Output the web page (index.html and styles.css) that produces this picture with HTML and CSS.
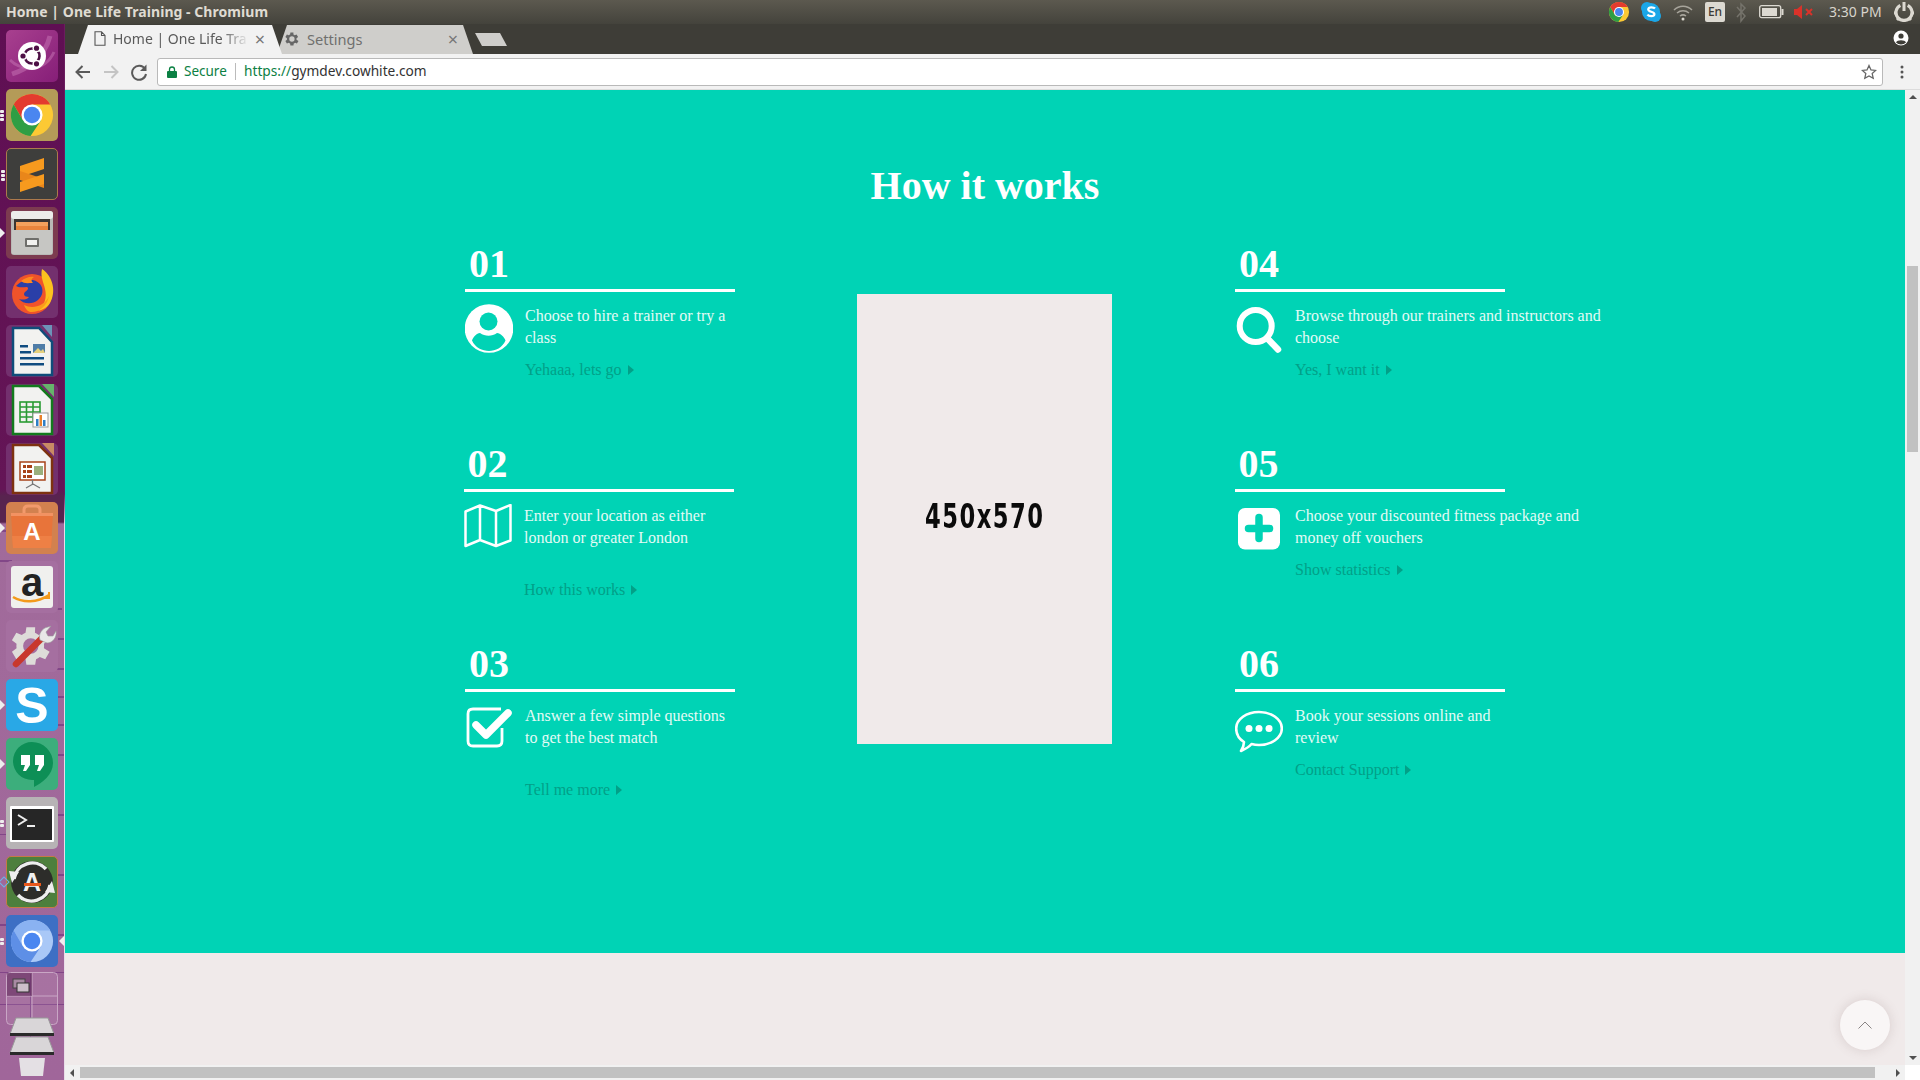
FILE: index.html
```html
<!DOCTYPE html>
<html lang="en">
<head>
<meta charset="utf-8">
<title>Home | One Life Training</title>
<link rel="stylesheet" href="styles.css">
</head>
<body>
<svg class="defs" width="0" height="0" aria-hidden="true">
  <defs>
    <symbol id="chrome" viewBox="0 0 48 48">
      <circle cx="24" cy="24" r="22" fill="#fcc934"/>
      <path d="M4.9 13A22 22 0 0 1 43 13H24L14.5 29.5Z" fill="#e33b2e"/>
      <path d="M4.9 13A22 22 0 0 0 22.5 45.9L33.5 29.5H14.5Z" fill="#2f9e44"/>
      <circle cx="24" cy="24" r="11" fill="#fff"/>
      <circle cx="24" cy="24" r="8.6" fill="#4a86f0"/>
    </symbol>
    <symbol id="chromium" viewBox="0 0 48 48">
      <circle cx="24" cy="24" r="22" fill="#a9c8f7"/>
      <path d="M4.9 13A22 22 0 0 1 43 13H24L14.5 29.5Z" fill="#8ab2f2"/>
      <path d="M4.9 13A22 22 0 0 0 22.5 45.9L33.5 29.5H14.5Z" fill="#5e8fe6"/>
      <circle cx="24" cy="24" r="11" fill="#fff"/>
      <circle cx="24" cy="24" r="8.6" fill="#4a86f0"/>
    </symbol>
    <symbol id="gear" viewBox="3 2 21 20">
      <path d="M19.4 13a7.5 7.5 0 0 0 0-2l2.1-1.6-2-3.4-2.5 1a7.500 7.500 0 0 0-1.700-1L15.400 3.400h-4l-.4 2.600a7.500 7.500 0 0 0-1.700 1l-2.500-1-2 3.400L6.900 11a7.500 7.500 0 0 0 0 2l-2.100 1.600 2 3.400 2.500-1a7.500 7.500 0 0 0 1.700 1l.4 2.600h4l.4-2.600a7.500 7.500 0 0 0 1.700-1l2.500 1 2-3.400ZM13.400 15.500a3.500 3.500 0 1 1 0-7 3.500 3.500 0 0 1 0 7Z"/>
    </symbol>
    <symbol id="caret" viewBox="0 0 6 10"><path d="M0 0l6 5-6 5z"/></symbol>
  </defs>
</svg>

<header class="menubar">
  <span class="window-title">Home | One Life Training - Chromium</span>
  <div class="tray">
    <svg class="tray-icon" width="22" height="22"><use href="#chrome"/></svg>
    <svg class="tray-icon" width="22" height="22" viewBox="0 0 22 22"><circle cx="7" cy="7" r="6" fill="#1ba7e8"/><circle cx="15" cy="15" r="6" fill="#1ba7e8"/><circle cx="11" cy="11" r="9" fill="#1ba7e8"/><path d="M15 7.500c-1-1.300-6.500-2-6.800.8-.2 3 6.500 1.900 6.200 5-.3 2.500-5.500 2.200-7 .3" fill="none" stroke="#fff" stroke-width="2.200"/></svg>
    <svg class="tray-icon" width="22" height="22" viewBox="0 0 22 22"><g fill="none" stroke="#a7a49b" stroke-width="1.500"><path d="M2 9c5-5 13-5 18 0"/><path d="M5 12c3.500-3 8.500-3 12 0"/><path d="M8 15c2-1.500 4-1.500 6 0"/></g><circle cx="11" cy="18" r="1.500" fill="#d8d5cd"/></svg>
    <span class="lang">En</span>
    <svg class="tray-icon" width="14" height="22" viewBox="0 0 14 22"><path d="M3 6l8 9-4 5V3l4 4-8 9" fill="none" stroke="#75736b" stroke-width="1.500"/></svg>
    <svg class="tray-icon" width="25" height="14" viewBox="0 0 25 14"><rect x=".7" y=".7" width="21" height="12" rx="2" fill="none" stroke="#dcd9d1" stroke-width="1.300"/><rect x="3" y="3" width="15" height="8" fill="#dcd9d1"/><rect x="22.500" y="4" width="2" height="6" fill="#dcd9d1"/></svg>
    <svg class="tray-icon" width="20" height="14" viewBox="0 0 20 14"><path d="M0 4h3l5-4v14l-5-4H0z" fill="#d9322a"/><path d="M12 4l6 6M18 4l-6 6" stroke="#d9322a" stroke-width="2"/></svg>
    <span class="clock">3:30 PM</span>
    <svg class="tray-power" width="20" height="20" viewBox="0 0 20 20"><path d="M6.300 3.300a8 8 0 1 0 7.400 0" fill="none" stroke="#dcd9d1" stroke-width="3.200"/><path d="M10 0v9" stroke="#dcd9d1" stroke-width="3"/><g stroke="#dcd9d1" stroke-width="3"><path d="M0 11h3M17 11h3M3 18l2-2M17 18l-2-2M10 20v-2"/></g></svg>
  </div>
</header>

<div class="workspace">
  <nav class="launcher">
    <svg class="behind" width="64" height="530" viewBox="0 0 64 530" aria-hidden="true"><g fill="#6a2a7a" opacity=".55"><rect x="0" y="6" width="16" height="2"/><rect x="0" y="36" width="12" height="2"/><rect x="40" y="84" width="22" height="2"/><rect x="44" y="114" width="20" height="2"/><rect x="52" y="144" width="12" height="2"/><rect x="46" y="172" width="18" height="2"/><rect x="56" y="200" width="8" height="2"/><rect x="56" y="230" width="8" height="2"/><rect x="58" y="290" width="6" height="2"/><rect x="0" y="310" width="22" height="1"/><rect x="58" y="350" width="6" height="2"/><rect x="0" y="400" width="10" height="2"/><rect x="58" y="410" width="6" height="2"/><rect x="0" y="448" width="64" height="1"/><rect x="30" y="450" width="1" height="80"/><rect x="0" y="480" width="64" height="1"/></g></svg>
    <div class="tile t-ubuntu">
      <svg width="52" height="52" viewBox="0 0 52 52"><path d="M6 44C18 40 38 30 44 6" stroke="#c776b5" stroke-width="5" fill="none" opacity=".5"/><path d="M4 30C14 40 38 44 48 22" stroke="#c776b5" stroke-width="3" fill="none" opacity=".5"/><circle cx="26" cy="26" r="14" fill="#fff"/><circle cx="26" cy="26" r="7.500" fill="none" stroke="#4d1045" stroke-width="2.600"/><g fill="#fff"><circle cx="17" cy="26" r="4"/><circle cx="30.500" cy="18.200" r="4"/><circle cx="30.500" cy="33.800" r="4"/></g><g fill="#4d1045"><circle cx="17" cy="26" r="2.600"/><circle cx="30.500" cy="18.200" r="2.600"/><circle cx="30.500" cy="33.800" r="2.600"/></g></svg>
    </div>
    <div class="tile t-chrome">
      <span class="pips"><i></i><i></i><i></i></span>
      <svg width="52" height="52"><use href="#chrome" x="3" y="3" width="46" height="46"/></svg>
    </div>
    <div class="tile t-sublime">
      <span class="pips"><i></i><i></i><i></i></span>
      <svg width="50" height="50" viewBox="0 0 50 50"><g fill="#f79a1e"><path d="M13 17l24-8v11l-24 8z"/><path d="M13 22l24 8v9l-24-8z" fill="#e9861a"/><path d="M13 33l24-8v10l-24 8z"/></g></svg>
    </div>
    <div class="tile t-files">
      <span class="arrow"></span>
      <svg width="52" height="52" viewBox="0 0 52 52"><rect x="5" y="4" width="42" height="44" rx="3" fill="#b9b9b6"/><rect x="5" y="4" width="42" height="8" rx="3" fill="#ececea"/><rect x="8" y="12" width="36" height="12" fill="#3b3533"/><rect x="10" y="15" width="32" height="4" fill="#f3a15d"/><rect x="10" y="19" width="32" height="4" fill="#e8843c"/><rect x="6" y="23" width="40" height="24" fill="#c6c6c3"/><rect x="19" y="31" width="14" height="9" rx="1" fill="#6e6e6b"/><rect x="21" y="33" width="10" height="5" fill="#f1f1ef"/></svg>
    </div>
    <div class="tile t-firefox">
      <svg width="52" height="52" viewBox="0 0 52 52"><circle cx="26" cy="28" r="20" fill="#f0532a"/><path d="M36 3c12 8 14 24 8 34-3 5-8 7-12 8 7-6 9-14 7-22-1-6-5-12-3-20z" fill="#fcc21f"/><path d="M10 20c6-7 18-9 24-2 4 5 3 12-2 16-6 5-15 4-19-1 3 1 8 1 10-2-5 0-6-3-4-5 3-2 4-4 2-5-4 0-8 1-11-1z" fill="#2a3fa8"/><path d="M15 15c4-3 9-5 13-4-3 2-3 4-1 6-5 0-9 1-12-2z" fill="#ff8a1e"/><path d="M18 39c8 4 20 2 25-9-2 10-10 17-19 16-3-1-5-4-6-7z" fill="#fb9a1c"/></svg>
    </div>
    <div class="tile t-soft">
      <svg width="52" height="52" viewBox="0 0 52 52"><path d="M7 3h26l13 14v33H7z" fill="#f2f2f0" stroke="#0f4c7a" stroke-width="2.500"/><path d="M36 0h10v12z" fill="#6d93b8"/><g fill="#104c80"><rect x="14" y="26" width="11" height="2.500"/><rect x="14" y="32" width="24" height="2.500"/><rect x="14" y="38" width="24" height="2.500"/><rect x="14" y="20" width="8" height="2.500"/></g><rect x="27" y="19" width="12" height="9" fill="#4f7da8"/><path d="M27 28l5-5 3 3 2-2 2 4z" fill="#e6d17d"/></svg>
    </div>
    <div class="tile t-soft">
      <svg width="52" height="52" viewBox="0 0 52 52"><path d="M7 2h26l13 13v35H7z" fill="#f2f2f0" stroke="#137a1d" stroke-width="2.500"/><path d="M36 0h12v13z" fill="#66b36b"/><g fill="none" stroke="#2a9b34" stroke-width="1.600"><rect x="14" y="18" width="20" height="20"/><path d="M14 23h20M14 28h20M14 33h20M20.500 18v20M27 18v20"/></g><rect x="27" y="29" width="15" height="14" fill="#fff" stroke="#999"/><rect x="30" y="35" width="2.500" height="7" fill="#2e7ec6"/><rect x="33.500" y="31" width="2.500" height="11" fill="#e9812c"/><rect x="37" y="36" width="2.500" height="6" fill="#2e7ec6"/></svg>
    </div>
    <div class="tile t-soft">
      <svg width="52" height="52" viewBox="0 0 52 52"><path d="M7 2h26l13 13v35H7z" fill="#f2f2f0" stroke="#7e3210" stroke-width="2.500"/><path d="M36 0h12v13z" fill="#c98a64"/><rect x="14" y="19" width="25" height="18" fill="#fff" stroke="#a8441a" stroke-width="1.500"/><g fill="#a8441a"><rect x="17" y="22" width="3" height="3"/><rect x="21" y="22" width="5" height="3"/><rect x="17" y="27" width="3" height="3"/><rect x="21" y="27" width="5" height="3"/><rect x="17" y="32" width="3" height="3"/><rect x="21" y="32" width="5" height="3"/></g><rect x="28" y="23" width="9" height="9" fill="#9ab07c"/><path d="M27 41l-7 4M27 41l7 4M26.500 37v5" stroke="#777" stroke-width="1.300"/></svg>
    </div>
    <div class="tile t-store">
      <span class="arrow"></span>
      <svg width="52" height="52" viewBox="0 0 52 52"><path d="M18 14V8q0-4 4-4h8q4 0 4 4v6" fill="none" stroke="#f29a6c" stroke-width="3"/><path d="M5 11h42l-2 34q0 1-2 1H9q-2 0-2-1z" fill="#e8743a"/><path d="M5 11h42v3H5z" fill="#f29262"/><path d="M6 34h40l-1 12H7z" fill="#ee8045"/></svg>
      <span class="tile-letter store-a">A</span>
    </div>
    <div class="tile t-glass">
      <svg width="52" height="52" viewBox="0 0 52 52"><rect x="5" y="5" width="42" height="42" rx="3" fill="#f0f0ee"/><path d="M7 36c10 6 24 6 36-2" fill="none" stroke="#f39a1c" stroke-width="2.500"/><path d="M43 31v6h-5" fill="none" stroke="#f39a1c" stroke-width="2"/></svg>
      <span class="tile-letter amazon-a">a</span>
    </div>
    <div class="tile t-glass">
      <svg width="52" height="52" viewBox="0 0 52 52"><use href="#gear" x="2" y="3" width="46" height="46" fill="#dedcd9"/><path d="M10 44L36 18" stroke="#c8382d" stroke-width="6.500" stroke-linecap="round"/><path d="M34 20c-2-6 2-12 8-13l3-1-5 6 2 4 5 0 3-5c1 6-3 12-9 12z" fill="#e8e8e8" stroke="#999" stroke-width=".6"/></svg>
    </div>
    <div class="tile t-skype">
      <span class="arrow"></span>
      <span class="tile-letter skype-s">S</span>
    </div>
    <div class="tile t-hangouts">
      <span class="arrow"></span>
      <svg width="52" height="52" viewBox="0 0 52 52"><path d="M26 4a21 21 0 0 1 21 21c0 12-11 20-19 24v-7h-2a19 19 0 0 1 0-38z" fill="#0d8f56"/><path d="M15 17h9v10l-4 6h-3l2-6h-4zM29 17h9v10l-4 6h-3l2-6h-4z" fill="#fff"/></svg>
    </div>
    <div class="tile t-term">
      <span class="pips pips-two"><i></i><i></i></span>
      <svg width="52" height="52" viewBox="0 0 52 52"><rect x="4" y="9" width="44" height="36" rx="1" fill="#fff"/><rect x="6" y="12" width="40" height="31" fill="#262626"/><path d="M12 18l8 5-8 5" fill="none" stroke="#eee" stroke-width="2"/><rect x="21" y="28" width="8" height="2" fill="#eee"/></svg>
    </div>
    <div class="tile t-update">
      <span class="diamond"></span>
      <svg width="50" height="50" viewBox="0 0 50 50"><circle cx="25" cy="25" r="21" fill="#2d2d2a"/><path d="M7 22A18.500 18.500 0 0 1 39 12M43 28A18.500 18.500 0 0 1 11 38" fill="none" stroke="#eee" stroke-width="3.500"/><path d="M2 14l10 1-7 11zM48 36l-10-1 7-11z" fill="#eee"/></svg>
      <span class="tile-letter update-a">A</span>
      <span class="update-bar"></span>
    </div>
    <div class="tile t-chromium">
      <span class="pips pips-two"><i></i><i></i></span>
      <span class="arrow-right"></span>
      <svg width="52" height="52"><use href="#chromium" x="3" y="3" width="46" height="46"/></svg>
    </div>
    <div class="tile t-tail">
      <svg width="52" height="106" viewBox="0 0 52 106"><rect x=".5" y=".5" width="51" height="52" rx="4" fill="#ffffff14" stroke="#c9a6c5"/><path d="M26 1v51M1 24h50" stroke="#c9a6c5"/><rect x="1" y="1" width="25" height="23" fill="#5a235588"/><rect x="7" y="7" width="12" height="9" fill="#a88aa3" stroke="#444"/><rect x="11" y="11" width="12" height="9" fill="#cdbfca" stroke="#333"/><path d="M10 46h32l6 16H4z" fill="#d9d6d8" stroke="#999"/><rect x="4" y="61" width="44" height="3" fill="#2a2a2a"/><path d="M10 65h32l6 16H4z" fill="#d9d6d8" stroke="#999"/><rect x="4" y="80" width="44" height="3" fill="#2a2a2a"/><path d="M13 86h26l-2 18H15z" fill="#e4e0e4"/></svg>
    </div>
  </nav>

  <div class="browser">
    <div class="tabstrip">
      <div class="tab tab-active">
        <svg class="tab-icon" width="12" height="15" viewBox="0 0 12 15"><path d="M1 .7h6.500L11 4.500v9.800H1z M7.500 .7v3.800H11" fill="none" stroke="#555" stroke-width="1.100"/></svg>
        <span class="tab-title tab-title-fade">Home | One Life Tra</span>
        <span class="tab-close">×</span>
      </div>
      <div class="tab tab-idle">
        <svg class="tab-icon" width="16" height="16" fill="#666"><use href="#gear"/></svg>
        <span class="tab-title">Settings</span>
        <span class="tab-close">×</span>
      </div>
      <span class="newtab"></span>
      <svg class="profile" width="16" height="16" viewBox="0 0 16 16"><circle cx="8" cy="8" r="7.500" fill="#fff"/><circle cx="8" cy="6" r="2.600" fill="#3e3d37"/><path d="M3 12.500c1-3 9-3 10 0a7 7 0 0 1-10 0z" fill="#3e3d37"/></svg>
    </div>
    <div class="toolbar">
      <div class="navs">
        <svg class="nav" width="28" height="18" viewBox="0 0 28 18"><path d="M21 9H8M13.500 3L7.500 9l6 6" fill="none" stroke="#5a5a5a" stroke-width="2"/></svg>
        <svg class="nav" width="28" height="18" viewBox="0 0 28 18"><path d="M7 9h13M14.500 3l6 6-6 6" fill="none" stroke="#c4c4c4" stroke-width="2"/></svg>
        <svg class="nav" width="28" height="18" viewBox="0 0 28 18"><path d="M20 6a7 7 0 1 0 1 5" fill="none" stroke="#5a5a5a" stroke-width="2"/><path d="M21.500 1.500v6.500H15z" fill="#5a5a5a"/></svg>
      </div>
      <div class="omnibox">
        <svg class="lock" width="10" height="12" viewBox="0 0 10 12"><path d="M2.500 5V3.500a2.500 2.500 0 0 1 5 0V5" fill="none" stroke="#0b8043" stroke-width="1.300"/><rect y="5" width="10" height="7" rx="1" fill="#0b8043"/></svg>
        <span class="secure">Secure</span>
        <span class="sep"></span>
        <span class="url"><span class="scheme">https://</span>gymdev.cowhite.com</span>
        <svg class="star" width="16" height="16" viewBox="0 0 16 16"><path d="M8 1.500l2 4.400 4.700.5-3.500 3.200 1 4.700L8 11.900l-4.200 2.400 1-4.700L1.300 6.400 6 5.900z" fill="none" stroke="#666" stroke-width="1.300"/></svg>
      </div>
      <svg class="dots" width="4" height="14" viewBox="0 0 4 14"><circle cx="2" cy="2" r="1.500" fill="#555"/><circle cx="2" cy="7" r="1.500" fill="#555"/><circle cx="2" cy="12" r="1.500" fill="#555"/></svg>
    </div>
    <div class="viewport">
      <main class="page">
        <section class="how">
          <h1 class="how-title">How it works</h1>
          <div class="how-grid">
            <article class="step step-nudge">
              <h2 class="step-no step-no-full">01</h2>
              <div class="step-body">
                <svg class="step-icon" width="48" height="50" viewBox="0 0 48 50"><circle cx="24" cy="24.500" r="24.300" fill="#fff"/><circle cx="23.500" cy="17.500" r="9" fill="#00d3b5"/><path d="M7 36.500c1.500-4 4.500-7 8-7.500 5 3.500 12 3.500 17 0 3.500.5 7 3.500 8.500 7.500-3 7-10 10.500-16.500 10.500S10 43.500 7 36.500z" fill="#00d3b5"/></svg>
                <div class="step-copy">
                  <p class="step-text">Choose to hire a trainer or try a class</p>
                  <a class="step-link" href="#">Yehaaa, lets go<svg class="caret" width="6" height="10"><use href="#caret"/></svg></a>
                </div>
              </div>
            </article>
            <div class="placeholder"><span class="placeholder-text">450x570</span></div>
            <article class="step">
              <h2 class="step-no step-no-full">04</h2>
              <div class="step-body">
                <svg class="step-icon" width="48" height="50" viewBox="0 0 48 50"><circle cx="20.700" cy="22" r="16" fill="none" stroke="#fff" stroke-width="6"/><path d="M32 34l11 11.500" stroke="#fff" stroke-width="6.500" stroke-linecap="round"/></svg>
                <div class="step-copy step-copy-wide">
                  <p class="step-text">Browse through our trainers and instructors and choose</p>
                  <a class="step-link" href="#">Yes, I want it<svg class="caret" width="6" height="10"><use href="#caret"/></svg></a>
                </div>
              </div>
            </article>
            <article class="step step-shift">
              <h2 class="step-no">02</h2>
              <div class="step-body">
                <svg class="step-icon" width="48" height="50" viewBox="0 0 48 50"><path d="M1.500 7.500L16 1.500l16 5.500 14.500-6v35.500L32 42 16 36 1.500 42z M16 1.500V36 M32 7V42" fill="none" stroke="#fff" stroke-width="2.500" stroke-linejoin="round"/></svg>
                <div class="step-copy">
                  <p class="step-text step-text-tall">Enter your location as either london or greater London</p>
                  <a class="step-link" href="#">How this works<svg class="caret" width="6" height="10"><use href="#caret"/></svg></a>
                </div>
              </div>
            </article>
            <article class="step">
              <h2 class="step-no">05</h2>
              <div class="step-body">
                <svg class="step-icon" width="48" height="50" viewBox="0 0 48 50"><rect x="3" y="4" width="42" height="41.500" rx="7" fill="#fff"/><path d="M24 13.500v21M13.500 24.500h21" stroke="#00d3b5" stroke-width="7.500" stroke-linecap="round"/></svg>
                <div class="step-copy step-copy-wide">
                  <p class="step-text">Choose your discounted fitness package and money off vouchers</p>
                  <a class="step-link" href="#">Show statistics<svg class="caret" width="6" height="10"><use href="#caret"/></svg></a>
                </div>
              </div>
            </article>
            <article class="step">
              <h2 class="step-no step-no-full">03</h2>
              <div class="step-body">
                <svg class="step-icon" width="48" height="50" viewBox="0 0 48 50"><path d="M37 24v13q0 5-5 5H8q-5 0-5-5V10q0-5 5-5h28" fill="none" stroke="#fff" stroke-width="2.800"/><path d="M11 21l10 10L43 9" fill="none" stroke="#fff" stroke-width="7.500" stroke-linecap="round" stroke-linejoin="round"/></svg>
                <div class="step-copy">
                  <p class="step-text step-text-tall">Answer a few simple questions to get the best match</p>
                  <a class="step-link" href="#">Tell me more<svg class="caret" width="6" height="10"><use href="#caret"/></svg></a>
                </div>
              </div>
            </article>
            <article class="step">
              <h2 class="step-no step-no-full">06</h2>
              <div class="step-body">
                <svg class="step-icon" width="48" height="50" viewBox="0 0 48 50"><path d="M24 8c12.500 0 22.800 7.200 22.800 16.500S36.500 41 24 41c-2.500 0-5-.3-7.500-1-2.500 3-6 5-10.500 7 1.500-2.500 3-5.500 3-9C4 35 1.200 30 1.200 24.500 1.200 15.200 11.500 8 24 8z" fill="none" stroke="#fff" stroke-width="2.600" stroke-linejoin="round"/><circle cx="14" cy="24.500" r="3.500" fill="#fff"/><circle cx="24" cy="24.500" r="3.500" fill="#fff"/><circle cx="34" cy="24.500" r="3.500" fill="#fff"/></svg>
                <div class="step-copy">
                  <p class="step-text">Book your sessions online and review</p>
                  <a class="step-link" href="#">Contact Support<svg class="caret" width="6" height="10"><use href="#caret"/></svg></a>
                </div>
              </div>
            </article>
          </div>
        </section>
        <div class="after"></div>
        <button class="to-top" type="button" aria-label="Back to top"><svg width="14" height="8" viewBox="0 0 14 8"><path d="M.5 7.500L7 1l6.500 6.500" fill="none" stroke="#8a8585" stroke-width="1"/></svg></button>
      </main>
      <div class="vscroll">
        <span class="sb-up"></span>
        <span class="vthumb"></span>
        <span class="sb-down"></span>
      </div>
    </div>
    <div class="hbar">
      <div class="hscroll">
        <span class="sb-left"></span>
        <span class="hthumb"></span>
        <span class="sb-right"></span>
      </div>
      <span class="corner"></span>
    </div>
  </div>
</div>
</body>
</html>
```

FILE: styles.css
```css
* { box-sizing: border-box; }
html, body { margin: 0; height: 100%; }
body { width: 1920px; height: 1080px; overflow: hidden; display: flex; flex-direction: column; background: #3e3d37; font-family: "Open Sans", sans-serif; }
.defs { position: absolute; }

.menubar { height: 24px; flex: none; display: flex; align-items: center; justify-content: space-between; padding-left: 6px; background: linear-gradient(#5c594f, #44433c); }
.window-title { font: 700 14px/24px "Noto Sans", sans-serif; color: #dfdbd2; letter-spacing: .05px; }
.tray { display: flex; align-items: center; height: 24px; }
.tray-icon { flex: none; display: block; }
.tray > :nth-child(1) { margin-right: 10px; }
.tray > :nth-child(2) { margin-right: 10px; }
.tray > :nth-child(3) { margin-right: 11px; }
.lang { width: 20px; height: 20px; margin-right: 9px; background: #dcd9d1; border-radius: 2px; font: 500 12px/20px "Noto Sans", sans-serif; text-align: center; color: #3c3b35; }
.tray > :nth-child(5) { margin-right: 11px; }
.tray > :nth-child(6) { margin-right: 10px; }
.tray > :nth-child(7) { margin-right: 15px; }
.clock { font: 400 14px/24px "Noto Sans", sans-serif; color: #d8d4cc; width: 55px; white-space: nowrap; margin-right: 10px; }
.tray-power { margin-right: 6px; }

.workspace { flex: 1; display: flex; min-height: 0; }

.launcher { position: relative; width: 65px; flex: none; display: flex; flex-direction: column; gap: 7px; padding: 6px 0 0 6px; overflow: hidden; border-right: 1px solid; border-image: linear-gradient(#6b1c5e 0, #6b1c5e 470px, #e9dde8 500px, #e9dde8 100%) 1;
  background: linear-gradient(#5f0f53 0, #641556 465px, #58244f 472px, #58244f 498px, #a16b9b 500px, #a0669a 100%); }
.behind { position: absolute; left: 0; top: 500px; }
.tile { position: relative; flex: none; width: 52px; height: 52px; border-radius: 5px; display: flex; align-items: center; justify-content: center; }
.tile svg { display: block; flex: none; }
.t-ubuntu { background: linear-gradient(135deg, #a8408f, #861e78); overflow: hidden; }
.t-chrome { background: #b49b58; }
.t-sublime { background: #3e3e3c; border: 1px solid #ac7a4c; }
.t-files { background: #7c3b50; }
.t-firefox { background: #73306e; }
.t-soft { background: #73306e; }
.t-store { background: #d2814f; }
.t-glass { background: #a56fa0; }
.t-skype { background: #29a8e6; }
.t-hangouts { background: #3cae7c; }
.t-term { background: #b7b3b5; }
.t-update { background: #4d7f3d; border: 1px solid #c77a45; }
.t-chromium { background: #3d6fc4; }
.t-tail { height: 106px; margin-top: -2px; }
.tile-letter { position: absolute; left: 0; right: 0; text-align: center; }
.store-a { top: 15px; font: 700 24px/30px "Liberation Sans", sans-serif; color: #fff; }
.amazon-a { top: 0; font: 700 40px/42px "Liberation Sans", sans-serif; color: #222; }
.skype-s { top: 0; font: 700 50px/54px "Liberation Sans", sans-serif; color: #fff; }
.update-a { top: 10px; font: 700 25px/30px "Liberation Sans", sans-serif; color: #f2f2f2; }
.update-bar { position: absolute; left: 17px; top: 26px; width: 17px; height: 3px; background: #e8581c; }
.pips { position: absolute; left: -6px; top: 21px; display: flex; flex-direction: column; gap: 1.500px; }
.pips i { display: block; width: 4px; height: 2.500px; background: #eee; border-radius: 1px; }
.pips-two { top: 23px; }
.arrow { position: absolute; left: -6px; top: 21px; width: 0; height: 0; border-style: solid; border-width: 5px 0 5px 5px; border-color: transparent transparent transparent #eee; }
.arrow-right { position: absolute; right: -6px; top: 21px; width: 0; height: 0; border-style: solid; border-width: 5px 5px 5px 0; border-color: transparent #eee transparent transparent; }
.diamond { position: absolute; left: -7px; top: 21px; width: 8px; height: 8px; transform: rotate(45deg); border: 1px solid #6fb4e8; }

.browser { flex: 1; min-width: 0; display: flex; flex-direction: column; }
.tabstrip { height: 30px; flex: none; display: flex; align-items: flex-end; padding-left: 13px; background: #3e3d37; position: relative; }
.tab { height: 29px; padding-bottom: 2px; display: flex; align-items: center; font: 400 14px/26px "Noto Sans", sans-serif; }
.tab-active { width: 204px; padding-left: 16px; padding-right: 16px; background: #f2f2f2; color: #5a5a5a; clip-path: polygon(0 100%, 10px 0, 194px 0, 100% 100%); position: relative; z-index: 1; }
.tab-idle { width: 196px; margin-left: -5px; padding-left: 7px; padding-right: 14px; background: #cfcecb; color: #70706e; clip-path: polygon(0 100%, 10px 0, 186px 0, 100% 100%); font-size: 14.600px; }
.tab-icon { flex: none; margin-right: 7px; }
.tab-title { flex: 1; overflow: hidden; white-space: nowrap; }
.tab-title-fade { -webkit-mask-image: linear-gradient(to right, #000 80%, transparent 100%); mask-image: linear-gradient(to right, #000 80%, transparent 100%); }
.tab-close { flex: none; width: 12px; margin-left: 5px; text-align: center; font-size: 18px; color: #777; line-height: 20px; }
.newtab { flex: none; width: 32px; height: 13px; margin: 0 0 8px 2px; background: #cfcecb; clip-path: polygon(0 0, 25px 0, 100% 100%, 7px 100%); }
.profile { position: absolute; right: 11px; top: 6px; }

.toolbar { height: 36px; flex: none; display: flex; align-items: center; padding: 0 0 0 4px; background: #f2f2f2; border-bottom: 1px solid #dcdcdc; }
.navs { display: flex; width: 88px; flex: none; }
.omnibox { width: 1726px; height: 28px; display: flex; align-items: center; padding: 0 5px 0 9px; background: #fff; border: 1px solid #b9b9b9; border-radius: 3px; font: 400 14px/24px "Noto Sans", sans-serif; }
.lock { flex: none; margin-right: 7px; }
.secure { color: #0b8043; font-size: 13.500px; width: 44px; white-space: nowrap; margin-bottom: 2px; }
.sep { width: 1px; height: 17px; background: #bbb; margin: 0 8px 0 7px; flex: none; }
.url { flex: 1; color: #333; font-size: 13.700px; white-space: nowrap; margin-bottom: 2px; }
.scheme { color: #0b8043; }
.star { flex: none; }
.dots { flex: none; margin-left: 17px; }

.viewport { flex: 1; min-height: 0; display: flex; }
.page { position: relative; flex: 1; min-width: 0; display: flex; flex-direction: column; background: #f0eaea; overflow: hidden; }
.how { flex: none; height: 863px; padding: 71px 0 0 400px; background: #00d3b5; }
.how-title { width: 1040px; margin: 0 0 30px 0; font: 700 40px/50px "Liberation Serif", serif; color: #fff; text-align: center; }
.how-grid { display: grid; width: 1140px; grid-template-columns: 392px 255px 493px; grid-template-rows: 200px 200px 200px; }
.how-grid .step:nth-of-type(even) { margin-left: 123px; width: 370px; }
.step { min-width: 0; }
.step-shift { margin-left: -1px; }
.step-no { margin: 0; padding-left: 3.500px; height: 48px; font: 700 40px/46px "Liberation Serif", serif; color: #fff; width: 270px; border: 0; }
.step-no-full { padding-left: 4px; }
.step-body { display: flex; width: 270px; gap: 12px; padding-top: 12px; border-top: 3px solid #fff; }
.step-icon { flex: none; display: block; }
.step-copy { width: 210px; flex: none; padding-top: 1px; }
.step-copy-wide { width: 312px; }
.step-text { margin: 0 0 10px; font: 400 16px/22px "Liberation Serif", serif; color: #e4fbf6; }
.step-text-tall { margin-bottom: 30px; }
.step-link { display: flex; align-items: center; font: 400 16px/22px "Liberation Serif", serif; color: #02a088; text-decoration: none; }
.caret { fill: #02a088; margin-left: 6px; flex: none; }
.placeholder { grid-row: 1 / span 3; grid-column: 2; align-self: start; height: 450px; margin-top: 53px; padding-bottom: 6px; display: flex; align-items: center; justify-content: center; background: #f0eaea; }
.placeholder-text { font: 700 34px/40px "DejaVu Sans Condensed", "DejaVu Sans", sans-serif; color: #0b0b0b; letter-spacing: 2px; transform: scaleX(.74); }
.after { flex: 1; background: #f0eaea; }
.to-top { position: absolute; right: 15px; bottom: 15px; width: 50px; height: 50px; padding: 0; border: 0; border-radius: 50%; background: #f9f6f6; box-shadow: 0 0 12px rgba(120, 90, 90, .2); display: flex; align-items: center; justify-content: center; }

.vscroll { width: 15px; flex: none; display: flex; flex-direction: column; align-items: center; background: #f1f1f1; }
.sb-up { width: 0; height: 0; margin-top: 5px; border-style: solid; border-width: 0 4px 4px; border-color: transparent transparent #505050; }
.vthumb { width: 11px; height: 186px; margin-top: 167px; background: #c1c1c1; }
.sb-down { width: 0; height: 0; margin-top: auto; margin-bottom: 5px; border-style: solid; border-width: 4px 4px 0; border-color: #505050 transparent transparent; }
.hbar { height: 15px; flex: none; display: flex; background: #fff; }
.hscroll { flex: 1; display: flex; align-items: center; background: #f1f1f1; }
.sb-left { width: 0; height: 0; margin-left: 5px; border-style: solid; border-width: 4px 4px 4px 0; border-color: transparent #505050 transparent transparent; }
.hthumb { width: 1795px; height: 11px; margin-left: 6px; background: #c1c1c1; }
.sb-right { width: 0; height: 0; margin-left: auto; margin-right: 5px; border-style: solid; border-width: 4px 0 4px 4px; border-color: transparent transparent transparent #505050; }
.corner { width: 15px; flex: none; background: #fff; }
```
